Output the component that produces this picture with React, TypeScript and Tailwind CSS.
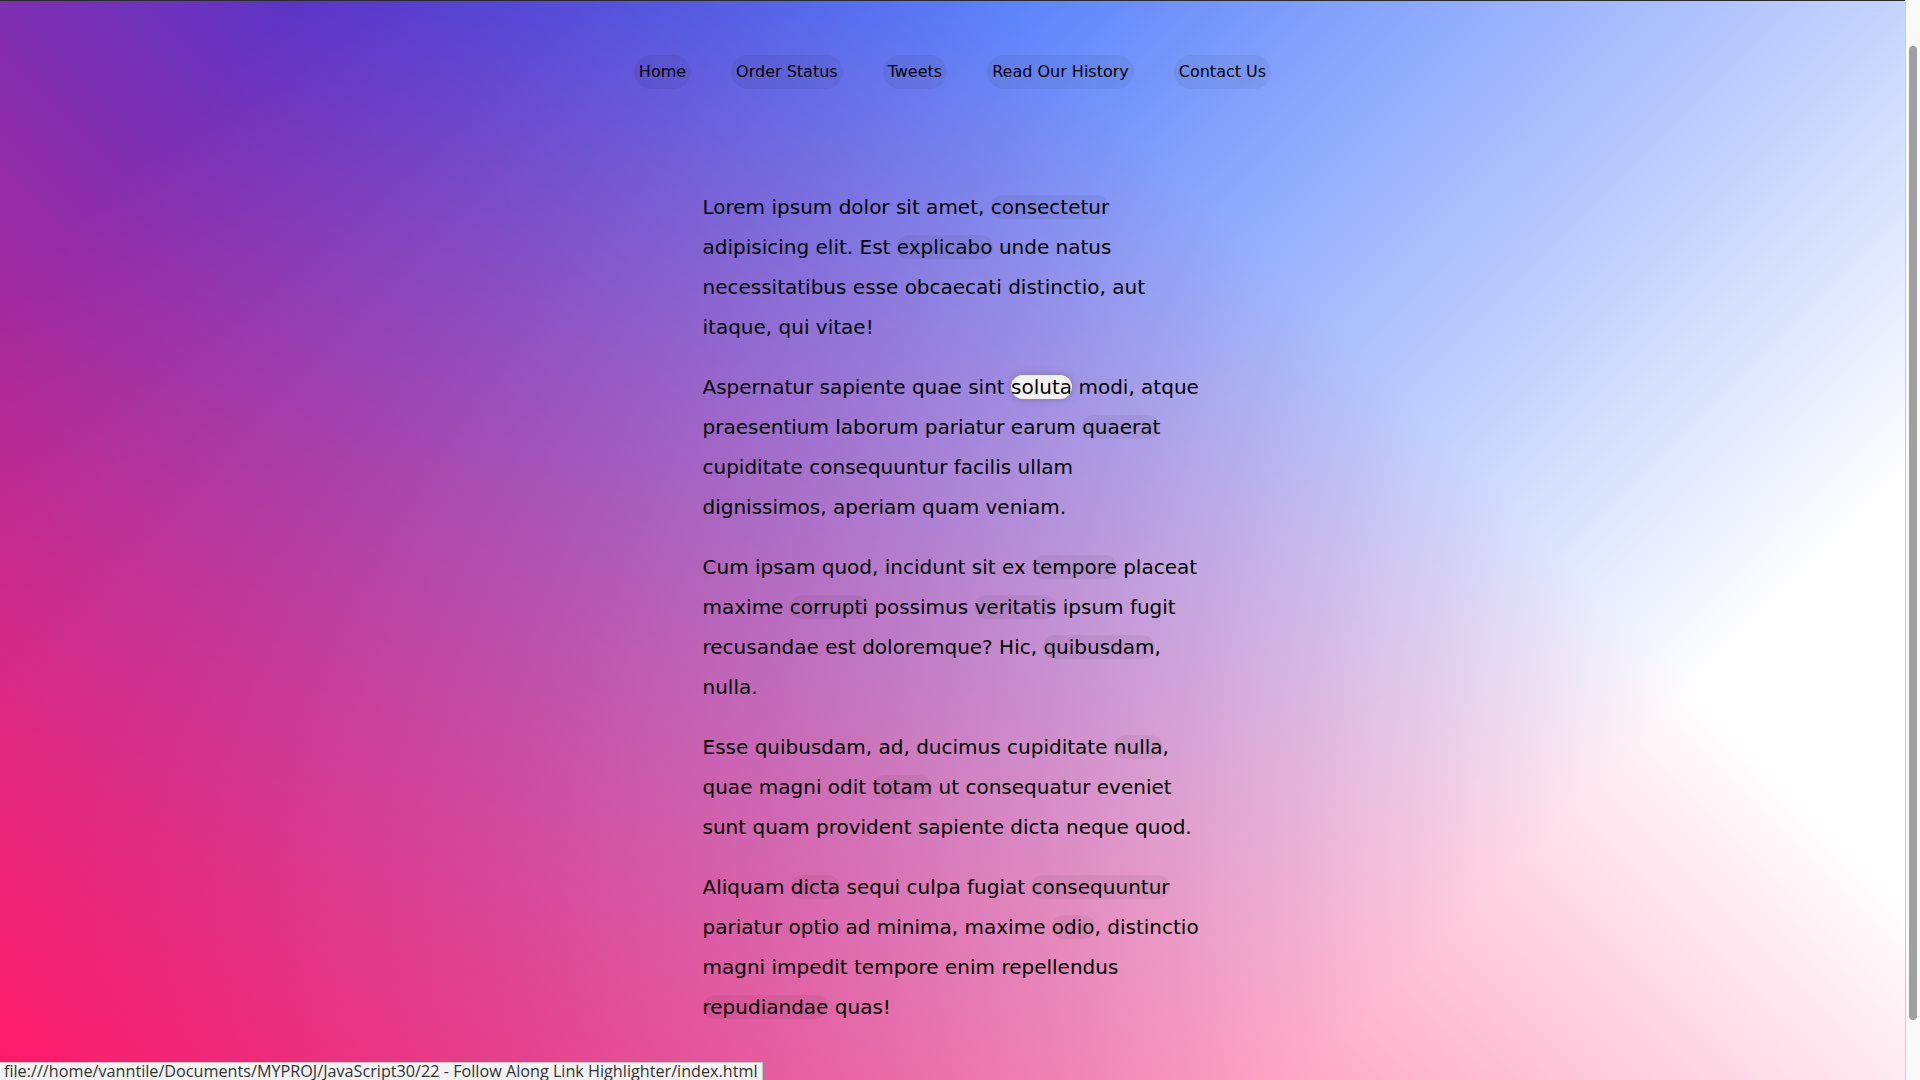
const menu = ["Home", "Order Status", "Tweets", "Read Our History", "Contact Us"];

type Part = string | { link: string; active?: boolean };

const paragraphs: Part[][] = [
  [
    "Lorem ipsum dolor sit amet, ",
    { link: "consectetur" },
    " adipisicing elit. Est ",
    { link: "explicabo" },
    " unde natus necessitatibus esse obcaecati distinctio, aut itaque, qui vitae!",
  ],
  [
    "Aspernatur sapiente quae sint ",
    { link: "soluta", active: true },
    " modi, atque praesentium laborum pariatur earum ",
    { link: "quaerat" },
    " cupiditate consequuntur facilis ullam dignissimos, aperiam quam veniam.",
  ],
  [
    "Cum ipsam quod, incidunt sit ex ",
    { link: "tempore" },
    " placeat maxime ",
    { link: "corrupti" },
    " possimus ",
    { link: "veritatis" },
    " ipsum fugit recusandae est doloremque? Hic, ",
    { link: "quibusdam" },
    ", nulla.",
  ],
  [
    "Esse quibusdam, ad, ducimus cupiditate ",
    { link: "nulla" },
    ", quae magni odit ",
    { link: "totam" },
    " ut consequatur eveniet sunt quam provident sapiente dicta neque quod.",
  ],
  [
    "Aliquam ",
    { link: "dicta" },
    " sequi culpa fugiat ",
    { link: "consequuntur" },
    " pariatur optio ad minima, maxime ",
    { link: "odio" },
    ", distinctio magni impedit tempore enim repellendus ",
    { link: "repudiandae" },
    " quas!",
  ],
];

export default function App() {
  return (
    <div className="relative flex h-screen w-full overflow-hidden font-['DejaVu_Sans',sans-serif] text-black">
      {/* Page */}
      <main className="h-full flex-1 border-t border-[#2a2a2a] bg-white [background-image:linear-gradient(45deg,hsla(340,100%,55%,1)_0%,hsla(340,100%,55%,0)_70%),linear-gradient(135deg,hsla(225,95%,50%,1)_10%,hsla(225,95%,50%,0)_80%)]">
        <nav className="flex justify-center pt-[54px]">
          {menu.map((item) => (
            <a
              key={item}
              href="#"
              className="mx-5 inline-block rounded-[20px] bg-black/5 p-[5px] text-base leading-normal text-black"
            >
              {item}
            </a>
          ))}
        </nav>

        <div className="mx-auto flex max-w-[500px] flex-col gap-5 pt-[98px] text-[20px] leading-[2]">
          {paragraphs.map((parts, i) => (
            <p key={i}>
              {parts.map((part, j) =>
                typeof part === "string" ? (
                  part
                ) : (
                  <a
                    key={j}
                    href="#"
                    className={
                      part.active
                        ? "rounded-[20px] bg-[#f3f3f3] shadow-[0_0_10px_rgba(0,0,0,0.2)]"
                        : "rounded-[20px] bg-black/5"
                    }
                  >
                    {part.link}
                  </a>
                )
              )}
            </p>
          ))}
        </div>
      </main>

      {/* Scrollbar */}
      <aside className="flex h-full w-[15px] flex-col border-l border-[#cdcdcd] bg-[#f9f9f9] pt-[46px] pb-[60px] pl-[3px]">
        <div className="h-full w-2 rounded-full bg-[#a0a0a0]" />
      </aside>

      {/* Status bar */}
      <div className="absolute bottom-0 left-0 h-[18px] overflow-hidden border-t border-r border-[#c4c4c4] bg-[#f2f2f2] px-1 font-['Open_Sans',sans-serif] text-[16.2px] leading-[16px] text-[#333]">
        file:///home/vanntile/Documents/MYPROJ/JavaScript30/22 - Follow Along Link Highlighter/index.html
      </div>
    </div>
  );
}
